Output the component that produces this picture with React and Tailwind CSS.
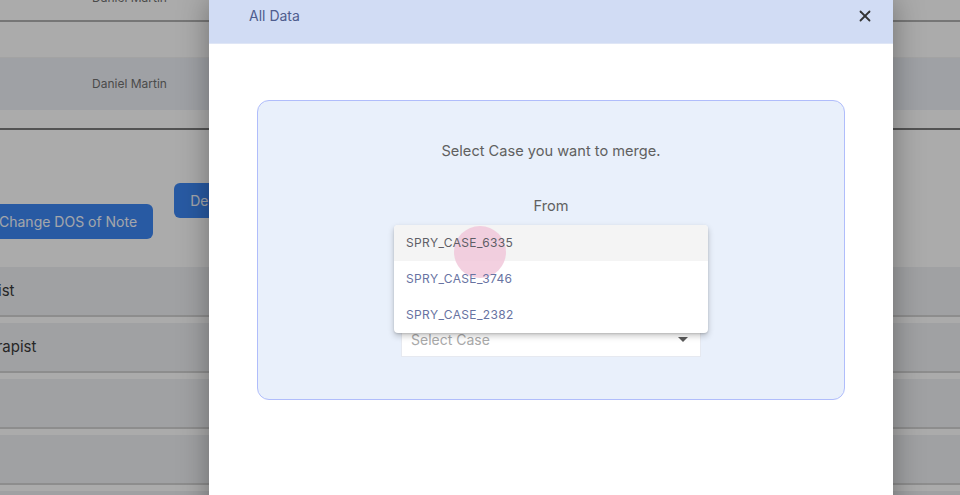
import { X } from 'lucide-react';

const rows = ['Receptionist', 'Physiotherapist', '', '', ''];
const cases = ['SPRY_CASE_6335', 'SPRY_CASE_3746', 'SPRY_CASE_2382'];

const BackgroundPage = () => (
  <div className="flex flex-col bg-white">
    <div className="h-[22px] overflow-hidden border-b-2 border-[#b0b0b0]">
      <p className="-mt-[11px] pl-[92px] text-[12px] text-[#6f6f6f]">Daniel Martin</p>
    </div>
    <div className="h-[36px] border-b border-[#f3f3f3]" />
    <div className="flex h-[52px] items-center bg-[#eef1f7] pl-[92px] text-[12px] text-[#707070]">
      Daniel Martin
    </div>
    <div className="h-[20px] border-b-2 border-[#7c7c7c]" />
    <div className="flex items-start gap-[21px] pt-[53px]">
      <button className="-ml-[17px] mt-[21px] h-[35px] rounded-md bg-[#3d86f3] px-4 text-[14px] text-[#f4f8ff]">
        Change DOS of Note
      </button>
      <button className="h-[35px] rounded-md bg-[#3d86f3] px-4 text-[14px] text-[#f4f8ff]">
        Delete Note
      </button>
    </div>
    <div className="mt-[28px] flex flex-col gap-[6px]">
      {rows.map((r, i) => (
        <div
          key={i}
          className="-ml-[73px] flex h-[50px] items-center border-b-2 border-[#d2d2d2] bg-[#eff1f4] text-[15px] text-[#3a3a3a]"
        >
          {r}
        </div>
      ))}
    </div>
  </div>
);

const CaseMenu = () => (
  <div className="absolute bottom-[24px] -left-[7px] z-10 w-[314px] overflow-hidden rounded bg-white shadow-[0_3px_6px_rgba(0,0,0,0.22),0_1px_2px_rgba(0,0,0,0.12)]">
    {cases.map((c, i) => (
      <div
        key={c}
        className={`relative flex h-[36px] items-center px-3 text-[12px] tracking-[0.03em] ${
          i === 0 ? 'bg-[#f4f4f4] text-[#5e5e66]' : 'text-[#6873a2]'
        }`}
      >
        {i === 0 && (
          <span className="absolute left-[60px] top-[1px] h-[52px] w-[52px] rounded-full bg-[#f0c4d8]/80" />
        )}
        <span className="relative">{c}</span>
      </div>
    ))}
  </div>
);

export default function App() {
  return (
    <div className="relative h-[495px] w-[960px] overflow-hidden font-['Inter',sans-serif]">
      <BackgroundPage />
      <div className="absolute inset-0 bg-black/[0.33]" />

      <div className="absolute inset-0">
        <div className="ml-[209px] flex h-[560px] w-[684px] flex-col bg-white shadow-[0_0_28px_rgba(0,0,0,0.35)]">
          <div className="flex h-[44px] items-start justify-between border-b border-[#dfe6f6] bg-[#d1dcf4] pl-[40px] pr-[19px] pt-[6px]">
            <span className="text-[14px] leading-[20px] text-[#4f5d8e]">All Data</span>
            <X className="mt-[1px] h-[18px] w-[18px] text-[#333]" strokeWidth={2.4} />
          </div>

          <div className="px-[48px] pt-[56px]">
            <div className="flex h-[300px] flex-col items-center rounded-[12px] border border-[#b0bdfb] bg-[#e9f0fb] pt-[40px]">
              <p className="text-[14.6px] leading-[20px] text-[#606060]">Select Case you want to merge.</p>
              <p className="mt-[35px] text-[14.6px] leading-[20px] text-[#606060]">From</p>

              <div className="relative mt-[105px] w-[300px]">
                <CaseMenu />
                <div className="flex h-[36px] items-center justify-between border border-[#e6e9f0] bg-white pl-[9px] pr-[12px]">
                  <span className="text-[14px] text-[#a9a9a9]">Select Case</span>
                  <span className="h-0 w-0 border-x-[5px] border-t-[5px] border-x-transparent border-t-[#5a5a5a]" />
                </div>
              </div>
            </div>
          </div>
        </div>
      </div>
    </div>
  );
}
